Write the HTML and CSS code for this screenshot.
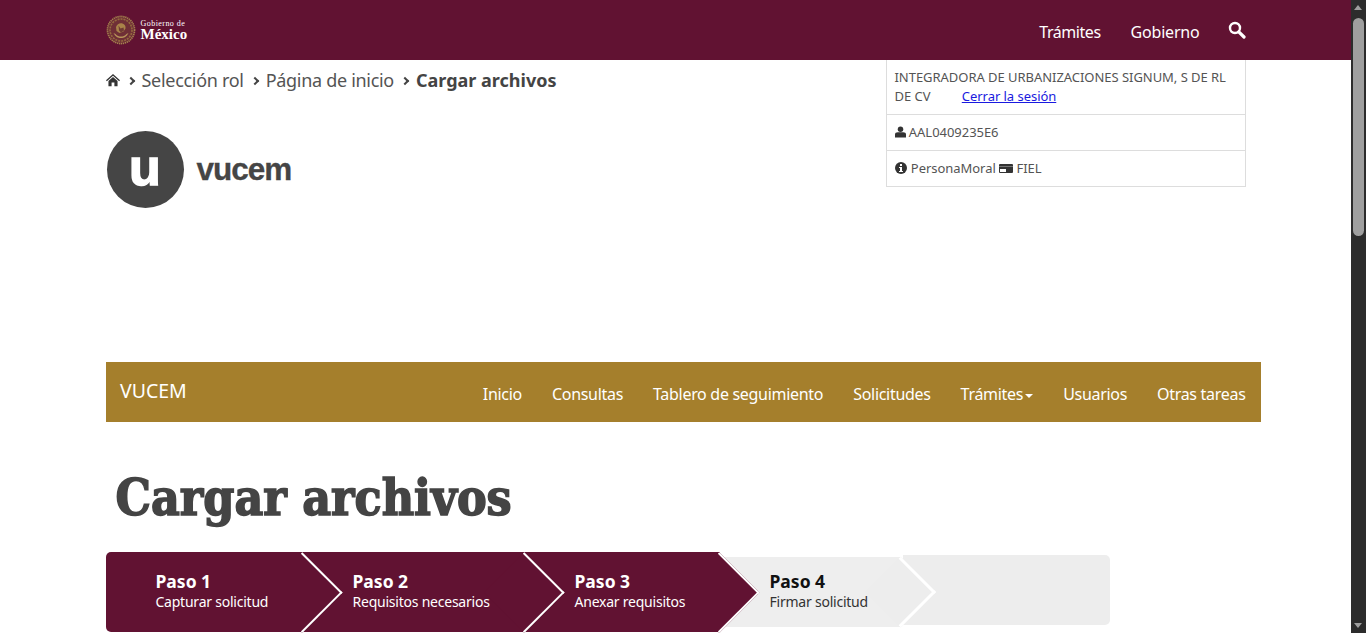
FILE: index.html
```html
<!DOCTYPE html>
<html lang="es">
<head>
  <meta charset="UTF-8">
  <title>Cargar archivos</title>
  <link rel="stylesheet" href="styles.css">
</head>
<body>
  <div class="pagina">
    <header class="barra-gob">
      <div class="barra-gob-inner">
        <a class="logo-gob">
          <svg class="escudo" viewBox="0 0 30 30" width="30" height="30">
            <circle cx="15" cy="15" r="13.6" fill="#6f2f36" stroke="#a5834f" stroke-width="1.6" stroke-dasharray="1.3 .7"/>
            <circle cx="15" cy="15" r="11" fill="none" stroke="#94693f" stroke-width="1.6" stroke-dasharray="2 1"/>
            <path d="M7.500 18c2 4 4.500 5 7.500 5s5.500-1 7.500-5l-2 1c-1.500 2-3.500 2.500-5.500 2.500S11 21 9.500 19z" fill="#b8955a"/>
            <path d="M10 12c1-3 4-4.500 6.500-3.500 2 .5 3.500 2.500 3 5l-2 3-4 1.500-3-2z" fill="#a98349"/>
            <path d="M12.500 10.500l2 3 3-1 .5 3-3 2-2-2z" fill="#6f3a34"/>
          </svg>
          <span class="logo-gob-texto">
            <span class="logo-gob-arriba">Gobierno de</span>
            <span class="logo-gob-abajo">México</span>
          </span>
        </a>
        <nav class="menu-gob">
          <a class="menu-tramites">Trámites</a>
          <a>Gobierno</a>
          <svg class="lupa" viewBox="0 0 18 18" width="18" height="18">
            <circle cx="7" cy="7" r="5" fill="none" stroke="#fff" stroke-width="2.400"/>
            <path d="M10.800 10.800L16 16" stroke="#fff" stroke-width="3.200" stroke-linecap="round"/>
          </svg>
        </nav>
      </div>
    </header>

    <div class="contenido">
      <section class="cabecera">
        <div class="cabecera-izq">
          <ol class="migas">
            <li>
              <svg viewBox="0 0 16 14" width="14" height="14">
                <path d="M8 0L0 7.200l1 1.100L8 2.200l7 6.100 1-1.100z" fill="#333"/>
                <path d="M2.800 8.200L8 3.700l5.200 4.500V14H9.600V9.800H6.400V14H2.800z" fill="#333"/>
              </svg>
            </li>
            <li class="miga">Selección rol</li>
            <li class="miga">Página de inicio</li>
            <li class="miga miga-activa">Cargar archivos</li>
          </ol>
          <div class="logo-vucem">
            <span class="logo-vucem-u">u</span>
            <span class="logo-vucem-texto">vucem</span>
          </div>
        </div>
        <div class="datos-usuario">
          <div class="dato dato-nombre">
            <div>INTEGRADORA DE URBANIZACIONES SIGNUM, S DE RL</div>
            <div>DE CV <a class="cerrar">Cerrar la sesión</a></div>
          </div>
          <div class="dato">
            <svg viewBox="0 0 12 12" width="11" height="12">
              <circle cx="6" cy="3" r="3" fill="#333"/>
              <path d="M0 12V8.500C0 7 1.200 6.200 3 6.200h6c1.800 0 3 .8 3 2.300V12z" fill="#333"/>
            </svg>
            AAL0409235E6
          </div>
          <div class="dato">
            <svg class="icono-info" viewBox="0 0 12 12" width="12" height="12">
              <circle cx="6" cy="6" r="6" fill="#333"/>
              <rect x="5" y="2" width="2" height="2" fill="#fff"/>
              <path d="M4 5h3v4h1v1H4V9h1V6H4z" fill="#fff"/>
            </svg>
            PersonaMoral
            <svg viewBox="0 0 14 10" width="14" height="10">
              <rect width="14" height="9" rx="1" fill="#333"/>
              <rect y="2" width="14" height="1" fill="#777"/>
              <rect y="5" x="1" width="6" height="3" fill="#fff"/>
            </svg>
            FIEL
          </div>
        </div>
      </section>

      <nav class="barra-vucem">
        <span class="marca">VUCEM</span>
        <div class="menu-vucem">
          <a>Inicio</a>
          <a>Consultas</a>
          <a>Tablero de seguimiento</a>
          <a>Solicitudes</a>
          <a>Trámites<span class="caret"></span></a>
          <a>Usuarios</a>
          <a>Otras tareas</a>
        </div>
      </nav>

      <h1>Cargar archivos</h1>

      <div class="pasos">
        <div class="paso paso-1"><strong>Paso 1</strong><span>Capturar solicitud</span></div>
        <div class="paso paso-2"><strong>Paso 2</strong><span>Requisitos necesarios</span></div>
        <div class="paso paso-3"><strong>Paso 3</strong><span>Anexar requisitos</span></div>
        <div class="paso paso-4"><strong>Paso 4</strong><span>Firmar solicitud</span></div>
        <div class="paso-fin"></div>
      </div>
    </div>
  </div>

  <div class="scroll-falso">
    <span class="flecha-arriba"></span>
    <span class="scroll-thumb"></span>
    <span class="flecha-abajo"></span>
  </div>
</body>
</html>
```

FILE: styles.css
```css
html, body {
  height: 100%;
}

body {
  margin: 0;
  overflow: hidden;
  font-family: "Noto Sans", "Open Sans", sans-serif;
  color: #545454;
  background: #fff;
}

.pagina {
  width: 1351px;
  height: 633px;
  overflow: hidden;
}

/* barra superior */
.barra-gob {
  background-color: #611232;
  height: 60px;
}

.barra-gob-inner {
  width: 1140px;
  height: 60px;
  margin: 0 auto;
  display: flex;
  align-items: center;
  justify-content: space-between;
}

.logo-gob {
  display: flex;
  align-items: center;
  gap: 5px;
  color: #fff;
}

.logo-gob-texto {
  display: flex;
  flex-direction: column;
  font-family: "Liberation Serif", serif;
}

.logo-gob-arriba {
  font-size: 8px;
  line-height: 9px;
  letter-spacing: 0.45px;
}

.logo-gob-abajo {
  font-size: 15px;
  line-height: 13px;
  font-weight: bold;
}

.menu-gob {
  display: flex;
  align-items: center;
  gap: 30px;
  color: #fff;
  font-size: 16px;
  letter-spacing: -0.2px;
  padding-top: 3px;
}

.menu-tramites {
  letter-spacing: -0.45px;
}

.lupa {
  margin: -3px 0 0 -2px;
}

.contenido {
  width: 1140px;
  margin: 0 auto;
}

/* migas y datos */
.cabecera {
  display: flex;
  justify-content: space-between;
  height: 302px;
}

.migas {
  list-style: none;
  margin: 0;
  padding: 7px 0 0;
  display: flex;
  align-items: center;
  gap: 8px;
  font-size: 18px;
  line-height: 26px;
  letter-spacing: -0.3px;
}

.migas svg {
  display: block;
}

.miga {
  display: flex;
  align-items: center;
  gap: 8px;
}

.miga::before {
  content: "";
  width: 4px;
  height: 4px;
  border-top: 2px solid #444;
  border-right: 2px solid #444;
  transform: rotate(45deg);
  margin-top: 2px;
}

.miga-activa {
  font-weight: bold;
  letter-spacing: 0;
  color: #444;
}

.logo-vucem {
  display: flex;
  align-items: center;
  gap: 13px;
  margin: 38px 0 0 1px;
}

.logo-vucem-u {
  width: 77px;
  height: 77px;
  border-radius: 50%;
  background: #454545;
  color: #fff;
  font-family: "Liberation Sans", sans-serif;
  font-weight: bold;
  font-size: 52px;
  line-height: 72px;
  text-align: center;
  -webkit-text-stroke: 1.500px #fff;
}

.logo-vucem-texto {
  font-family: "Liberation Sans", sans-serif;
  font-weight: bold;
  font-size: 31.500px;
  letter-spacing: -1px;
  color: #454545;
  -webkit-text-stroke: 0.300px #454545;
}

.datos-usuario {
  width: 360px;
  height: 127px;
  box-sizing: border-box;
  border: 1px solid #ddd;
  border-top: none;
  font-size: 13px;
  letter-spacing: -0.04px;
  line-height: 19px;
}

.dato {
  padding: 8px;
  height: 36px;
  box-sizing: border-box;
  border-top: 1px solid #ddd;
}

.dato-nombre {
  border-top: none;
  height: 54px;
}

.dato svg {
  vertical-align: -1px;
}

.icono-info {
  margin-right: 1px;
}

.cerrar {
  color: #1a1ae0;
  text-decoration: underline;
  margin-left: 28px;
}

/* menu dorado */
.barra-vucem {
  width: 1155px;
  height: 60px;
  box-sizing: border-box;
  background-color: #a57f2c;
  color: #fff;
  display: flex;
  justify-content: space-between;
  padding: 0 15px 0 14.500px;
}

.marca {
  font-size: 19.500px;
  line-height: 58px;
}

.menu-vucem {
  display: flex;
  gap: 30px;
  font-size: 16px;
  letter-spacing: -0.3px;
  line-height: 64px;
}

.caret {
  display: inline-block;
  border-top: 4px solid #fff;
  border-left: 4px solid transparent;
  border-right: 4px solid transparent;
  margin-left: 2px;
  vertical-align: 2px;
}

h1 {
  margin: 42px 0 20px 10px;
  height: 68px;
  font-family: "DejaVu Serif Condensed", "DejaVu Serif", serif;
  font-weight: bold;
  font-size: 49.500px;
  line-height: 68px;
  color: #444;
  -webkit-text-stroke: 1.500px #444;
}

/* pasos */
.pasos {
  display: flex;
  height: 80px;
  align-items: center;
}

.paso {
  position: relative;
  box-sizing: border-box;
  height: 80px;
  padding: 18px 0 0 50px;
  background: #611232;
  color: #fff;
  font-size: 14px;
  letter-spacing: -0.23px;
  line-height: 19px;
}

.paso strong {
  display: block;
  position: relative;
  z-index: 2;
  font-size: 17.500px;
  letter-spacing: 0;
  line-height: 22px;
}

.paso span {
  display: block;
  position: relative;
  z-index: 2;
}

.paso::after {
  content: "";
  position: absolute;
  top: 11.700px;
  right: -28px;
  width: 56.600px;
  height: 56.600px;
  box-sizing: border-box;
  background: #611232;
  border-top: 2px solid #fff;
  border-right: 2px solid #fff;
  transform: rotate(45deg);
}

.paso-1 {
  width: 197px;
  border-radius: 5px 0 0 5px;
  z-index: 4;
}

.paso-2 {
  width: 222px;
  z-index: 3;
}

.paso-3 {
  width: 195px;
  z-index: 2;
}

.paso-4 {
  width: 181px;
  height: 70px;
  padding-top: 13px;
  background: #eee;
  color: #333;
  z-index: 1;
}

.paso-4 strong {
  color: #111;
}

.paso-4::after {
  top: 10.250px;
  right: -24.700px;
  width: 49.500px;
  height: 49.500px;
  background: #ededed;
  border-top: 3px solid #fff;
  border-right: 3px solid #fff;
}

.paso-fin {
  width: 207px;
  height: 70px;
  margin-top: -4px;
  background: #ededed;
  border-radius: 0 5px 5px 0;
  margin-left: 2px;
}

/* barra de desplazamiento */
.scroll-falso {
  position: fixed;
  top: 0;
  right: 0;
  bottom: 0;
  width: 15px;
  background: #2c2c2c;
}

.scroll-thumb {
  position: absolute;
  left: 2px;
  top: 18px;
  width: 11px;
  height: 218px;
  border-radius: 6px;
  background: #9f9f9f;
}

.flecha-arriba,
.flecha-abajo {
  position: absolute;
  left: 3px;
  width: 0;
  height: 0;
  border-left: 4.500px solid transparent;
  border-right: 4.500px solid transparent;
}

.flecha-arriba {
  top: 5px;
  border-bottom: 5px solid #9f9f9f;
}

.flecha-abajo {
  bottom: 5px;
  border-top: 5px solid #9f9f9f;
}
```
